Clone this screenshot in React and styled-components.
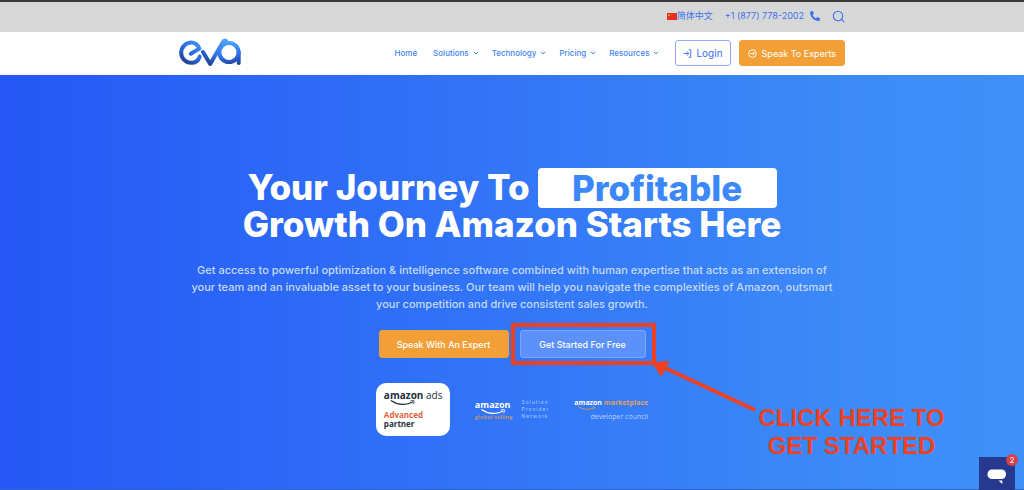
import React from "react";
import styled, { createGlobalStyle } from "styled-components";

const menu = [
  { label: "Home" },
  { label: "Solutions", drop: true },
  { label: "Technology", drop: true },
  { label: "Pricing", drop: true },
  { label: "Resources", drop: true },
];

function Chevron() {
  return (
    <svg width="6" height="4" viewBox="0 0 6 4" fill="none" aria-hidden="true">
      <path d="M.8.8 3 2.9 5.2.8" stroke="currentColor" strokeWidth="1" />
    </svg>
  );
}

function Flag() {
  return (
    <svg width="10" height="7" viewBox="0 0 10 7" aria-hidden="true">
      <rect width="10" height="7" fill="#e6301f" />
      <path d="m1.9.8.4 1h1l-.8.6.3 1-.9-.6-.9.6.3-1-.8-.6h1z" fill="#f5b52b" />
      <circle cx="3.9" cy="1" r=".3" fill="#f5b52b" />
      <circle cx="4.3" cy="2.1" r=".3" fill="#f5b52b" />
    </svg>
  );
}

function EvaLogo() {
  return (
    <svg width="62" height="30" viewBox="0 0 62 30" fill="none" role="img" aria-label="eva">
      <defs>
        <linearGradient id="e" x1="20" y1="4" x2="3" y2="26" gradientUnits="userSpaceOnUse">
          <stop stopColor="#3f95f8" />
          <stop offset=".5" stopColor="#2b68dc" />
          <stop offset="1" stopColor="#1c3679" />
        </linearGradient>
        <linearGradient id="v" x1="44" y1="2" x2="28" y2="28" gradientUnits="userSpaceOnUse">
          <stop stopColor="#4ba2f9" />
          <stop offset=".6" stopColor="#2e6be6" />
          <stop offset="1" stopColor="#1c3679" />
        </linearGradient>
        <linearGradient id="a" x1="50" y1="3" x2="54" y2="28" gradientUnits="userSpaceOnUse">
          <stop stopColor="#4fa5fb" />
          <stop offset=".55" stopColor="#2e70ef" />
          <stop offset="1" stopColor="#1f418f" />
        </linearGradient>
      </defs>
      <path
        d="M11.8 15.700 20.400 10.600C18.600 6.800 15.400 4.600 12.300 4.600a10 10 0 1 0 0 20.200c3.900 0 7.200-2.300 8.400-6.200"
        stroke="url(#e)" strokeWidth="4" strokeLinecap="round" strokeLinejoin="round"
      />
      <circle cx="50" cy="14.500" r="9.600" stroke="url(#a)" strokeWidth="4" />
      <path d="M59.700 14v11" stroke="url(#a)" strokeWidth="4" strokeLinecap="round" />
      <path
        d="m24 14 7.200 12L43.800 4.200c.8-1.400 2-1.800 3.200-1.400"
        stroke="url(#v)" strokeWidth="4" strokeLinecap="round" strokeLinejoin="round"
      />
    </svg>
  );
}

function Smile({ width, height, color }) {
  return (
    <svg width={width} height={height} viewBox="0 0 30 6" fill="none" aria-hidden="true">
      <path d="M1 .8c8 5.6 19 5.6 25.400 1.700" stroke={color} strokeWidth="1.500" strokeLinecap="round" />
      <path d="M24 1.200c2-.8 3.800-.7 4.200-.2s0 2.600-1.200 4" stroke={color} strokeWidth="1.100" />
    </svg>
  );
}

export default function App() {
  return (
    <>
      <GlobalStyle />
      <Page>
        <TopBar>
          <TopInner>
            <TopLink href="#zh" lang="zh-CN">
              <Flag />
              简体中文
            </TopLink>
            <TopLink href="tel:+18777782002" $gap>
              +1 (877) 778-2002
              <svg width="10" height="10" viewBox="0 0 512 512" fill="currentColor" aria-hidden="true">
                <path d="M493 24.600 389 .6c-11-3-23 3-27 14l-48 112c-4 10-1 21 7 28l60 50c-36 76-98 139-176 176l-50-60c-7-8-18-11-28-7L15 362c-11 5-17 17-14 28l24 104c3 11 12 18 23 18 256 0 464-207 464-464 0-11-8-21-19-23z" transform="matrix(-1 0 0 1 512 0)" />
              </svg>
            </TopLink>
            <IconButton aria-label="Search">
              <svg width="13" height="13" viewBox="0 0 13 13" fill="none" aria-hidden="true">
                <circle cx="6" cy="6" r="4.700" stroke="currentColor" strokeWidth="1.100" />
                <path d="m9.400 9.400 2.500 2.500" stroke="currentColor" strokeWidth="1.100" strokeLinecap="round" />
              </svg>
            </IconButton>
          </TopInner>
        </TopBar>

        <Header>
          <HeaderInner>
            <LogoLink href="#home">
              <EvaLogo />
            </LogoLink>
            <Nav>
              {menu.map((item) => (
                <NavLink key={item.label} href={`#${item.label.toLowerCase()}`}>
                  {item.label}
                  {item.drop && <Chevron />}
                </NavLink>
              ))}
            </Nav>
            <Actions>
              <HeaderButton>
                <svg width="9" height="9" viewBox="0 0 10 10" fill="none" stroke="currentColor" aria-hidden="true">
                  <path d="M.5 5h5.800M4.200 2.600 6.600 5 4.200 7.400M6.300.8h2.300v8.400H6.300" />
                </svg>
                Login
              </HeaderButton>
              <HeaderButton $solid>
                <svg width="9" height="9" viewBox="0 0 10 10" fill="none" stroke="currentColor" aria-hidden="true">
                  <circle cx="5" cy="5" r="4.300" />
                  <path d="M2.600 5h4.600M5.400 3.100 7.300 5 5.400 6.900" />
                </svg>
                Speak To Experts
              </HeaderButton>
            </Actions>
          </HeaderInner>
        </Header>

        <Hero>
          <Title>
            <TitleLine>
              Your Journey To <Highlight>Profitable</Highlight>
            </TitleLine>
            <TitleLine>Growth On Amazon Starts Here</TitleLine>
          </Title>
          <Lead>
            Get access to powerful optimization &amp; intelligence software combined with human expertise that acts as an extension of
            <br />
            your team and an invaluable asset to your business. Our team will help you navigate the complexities of Amazon, outsmart
            <br />
            your competition and drive consistent sales growth.
          </Lead>
          <Buttons>
            <HeroButton $solid>Speak With An Expert</HeroButton>
            <Marked>
              <HeroButton>Get Started For Free</HeroButton>
              <Callout>
                <svg width="106" height="52" viewBox="0 0 106 52" aria-hidden="true">
                  <path d="M12 6 104 49" stroke="#ee4123" strokeWidth="4" />
                  <path d="M0 0 18.500-1 10.500 15z" fill="#ee4123" transform="translate(0 1)" />
                </svg>
                <CalloutText>
                  CLICK HERE TO
                  <br />
                  GET STARTED
                </CalloutText>
              </Callout>
            </Marked>
          </Buttons>
          <Partners>
            <AdsCard>
              <Brand>
                <b>amazon</b> ads
                <BrandSmile>
                  <Smile width={26} height={5} color="#232f3e" />
                </BrandSmile>
              </Brand>
              <AdsLevel>Advanced</AdsLevel>
              <AdsPartner>partner</AdsPartner>
            </AdsCard>
            <SellingLogo>
              <div>
                <Brand $small>
                  <b>amazon</b>
                  <BrandSmile $small>
                    <Smile width={25} height={5} color="#ffffff" />
                  </BrandSmile>
                </Brand>
                <Selling>global selling</Selling>
              </div>
              <Provider>
                Solution
                <br />
                Provider
                <br />
                Network
              </Provider>
            </SellingLogo>
            <MarketLogo>
              <Market>
                <b>amazon</b> <em>marketplace</em>
                <MarketSmile>
                  <Smile width={18} height={4} color="#e99b50" />
                </MarketSmile>
              </Market>
              <Council>developer council</Council>
            </MarketLogo>
          </Partners>
        </Hero>

        <Chat aria-label="Open chat">
          <svg width="20" height="16" viewBox="0 0 20 16" fill="#fff" aria-hidden="true">
            <rect x=".5" y=".5" width="18.500" height="9.500" rx="4.500" />
            <path d="M11.500 11.500h3.800v3.600z" />
          </svg>
          <ChatCount>2</ChatCount>
        </Chat>
      </Page>
    </>
  );
}

const GlobalStyle = createGlobalStyle`
  * {
    box-sizing: border-box;
  }
  body {
    margin: 0;
    font-family: Inter, "Noto Sans CJK SC", sans-serif;
    color: #ffffff;
  }
  button {
    font-family: inherit;
    cursor: pointer;
  }
  a {
    text-decoration: none;
  }
  svg {
    flex-shrink: 0;
  }
`;

const Page = styled.div`
  min-height: 100vh;
  display: flex;
  flex-direction: column;
`;

const TopBar = styled.div`
  border-top: 2px solid #3b383d;
  background-color: #d7d7d7;
  padding: 6px 0 8px;
`;

const TopInner = styled.div`
  max-width: 666px;
  margin: 0 auto;
  display: flex;
  align-items: center;
  justify-content: flex-end;
  gap: 12px;
`;

const TopLink = styled.a`
  display: flex;
  align-items: center;
  gap: ${(props) => (props.$gap ? "6px" : "0")};
  font-size: 9px;
  line-height: 16px;
  color: #3a72f0;
`;

const IconButton = styled.button`
  display: flex;
  padding: 0;
  border: none;
  background: none;
  color: #3a72f0;
`;

const Header = styled.header`
  background-color: #ffffff;
  padding: 6px 0 7px;
`;

const HeaderInner = styled.div`
  max-width: 666px;
  margin: 0 auto;
  display: flex;
  align-items: center;
`;

const LogoLink = styled.a`
  display: flex;
`;

const Nav = styled.nav`
  margin-left: auto;
  display: flex;
  gap: 13px;
`;

const NavLink = styled.a`
  display: flex;
  align-items: center;
  gap: 4px;
  font-size: 8px;
  font-weight: 500;
  line-height: 12px;
  color: #4284f6;
  &:first-child {
    margin-right: 3px;
  }
`;

const Actions = styled.div`
  margin-left: 16px;
  display: flex;
  gap: 8px;
`;

const HeaderButton = styled.button`
  display: flex;
  align-items: center;
  justify-content: center;
  gap: ${(props) => (props.$solid ? "5px" : "4px")};
  height: 26px;
  padding: 0 ${(props) => (props.$solid ? "8px" : "7px")};
  border: 1px solid ${(props) => (props.$solid ? "#f39f37" : "#8eaafb")};
  border-radius: 3px;
  background-color: ${(props) => (props.$solid ? "#f39f37" : "#ffffff")};
  color: ${(props) => (props.$solid ? "#ffffff" : "#3a6cf3")};
  font-size: ${(props) => (props.$solid ? "9px" : "10px")};
`;

const Hero = styled.main`
  flex: 1;
  display: flex;
  flex-direction: column;
  align-items: center;
  padding: 94px 16px 50px;
  border-bottom: 1px solid #2f66bd;
  background: linear-gradient(90deg, #2558f6 0%, #3173f7 45%, #3d8bf8 85%, #3f90f9 100%);
`;

const Title = styled.h1`
  margin: 0;
  font-size: 35px;
  font-weight: 800;
  line-height: 37px;
`;

const TitleLine = styled.span`
  display: flex;
  align-items: center;
  justify-content: center;
  gap: 8px;
  height: 37px;
`;

const Highlight = styled.span`
  min-width: 239px;
  border-radius: 4px;
  background-color: #ffffff;
  color: #3d88f8;
  line-height: 40px;
  text-align: center;
`;

const Lead = styled.p`
  margin: 19px 0 17px;
  font-size: 11px;
  font-weight: 500;
  line-height: 17px;
  text-align: center;
  color: #c6d9fd;
`;

const Buttons = styled.div`
  display: flex;
  gap: 11px;
`;

const HeroButton = styled.button`
  height: 28px;
  min-width: ${(props) => (props.$solid ? "130px" : "126px")};
  padding: 0 16px;
  border: 1px solid ${(props) => (props.$solid ? "#f39f37" : "#7ba6fa")};
  border-radius: 3px;
  background-color: ${(props) => (props.$solid ? "#f39f37" : "#5b91f9")};
  color: #ffffff;
  font-size: 9px;
  font-weight: 500;
`;

const Marked = styled.div`
  position: relative;
  &::before {
    content: "";
    position: absolute;
    inset: -7px -10px -7px -9px;
    border: 4px solid #ee4123;
    pointer-events: none;
  }
`;

/* hangs off the corner of the framed button */
const Callout = styled.div`
  position: absolute;
  top: 31px;
  left: 131px;
  display: flex;
  align-items: flex-start;
  pointer-events: none;
`;

const CalloutText = styled.strong`
  margin-top: 43px;
  margin-left: 2px;
  font-family: "Liberation Sans", Arial, sans-serif;
  font-size: 24px;
  font-weight: 700;
  line-height: 28px;
  text-align: center;
  white-space: nowrap;
  color: #ee4123;
`;

const Partners = styled.div`
  display: flex;
  align-items: center;
  gap: 25px;
  margin-top: 25px;
  font-family: "Open Sans", "Noto Sans", sans-serif;
`;

const AdsCard = styled.div`
  width: 74px;
  padding: 4px 8px 8px;
  border-radius: 10px;
  background-color: #ffffff;
  color: #232f3e;
`;

const Brand = styled.div`
  position: relative;
  font-size: ${(props) => (props.$small ? "9px" : "10px")};
  line-height: ${(props) => (props.$small ? "12px" : "16px")};
  white-space: nowrap;
`;

const BrandSmile = styled.span`
  position: absolute;
  left: 6px;
  top: ${(props) => (props.$small ? "10px" : "13px")};
  display: flex;
`;

const AdsLevel = styled.div`
  margin-top: 7px;
  font-size: 8px;
  font-weight: 700;
  line-height: 9px;
  color: #e2653a;
`;

const AdsPartner = styled(AdsLevel)`
  margin-top: 0;
  color: #232f3e;
`;

const SellingLogo = styled.div`
  display: flex;
  align-items: center;
  gap: 9px;
`;

const Selling = styled.div`
  margin-top: 2px;
  font-size: 6px;
  font-weight: 600;
  line-height: 8px;
  color: #c9986c;
`;

const Provider = styled.div`
  font-family: Inter, sans-serif;
  font-size: 5px;
  letter-spacing: 1px;
  line-height: 7px;
  color: #a9c6fc;
`;

const MarketLogo = styled.div`
  text-align: right;
`;

const Market = styled.div`
  position: relative;
  font-size: 7px;
  line-height: 12px;
  white-space: nowrap;
  em {
    font-style: normal;
    font-weight: 700;
    color: #e0a062;
  }
`;

const MarketSmile = styled.span`
  position: absolute;
  left: 4px;
  top: 9px;
  display: flex;
`;

const Council = styled.div`
  margin-top: 3px;
  font-size: 7px;
  line-height: 10px;
  color: #b9d1fd;
`;

const Chat = styled.button`
  position: fixed;
  right: 9px;
  bottom: 0;
  display: flex;
  justify-content: center;
  width: 36px;
  height: 33px;
  padding: 12px 0 0;
  border: none;
  background-color: #26398f;
`;

const ChatCount = styled.span`
  position: absolute;
  top: -3px;
  right: -3px;
  width: 12px;
  height: 12px;
  border-radius: 50%;
  background-color: #d6414b;
  color: #ffffff;
  font-size: 8px;
  line-height: 12px;
`;
